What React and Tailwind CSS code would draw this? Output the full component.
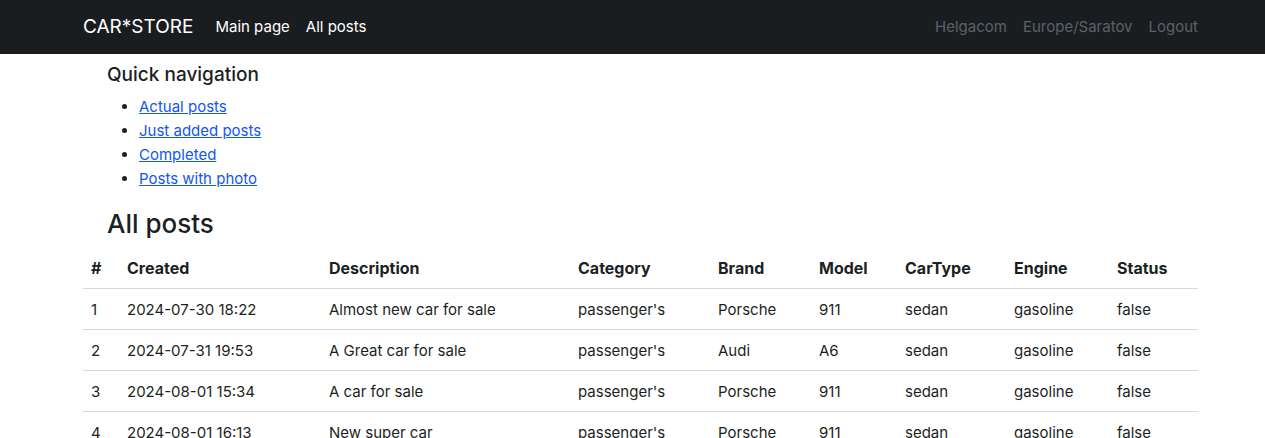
const posts = [
  ["2024-07-30 18:22", "Almost new car for sale", "Porsche", "911"],
  ["2024-07-31 19:53", "A Great car for sale", "Audi", "A6"],
  ["2024-08-01 15:34", "A car for sale", "Porsche", "911"],
  ["2024-08-01 16:13", "New super car", "Porsche", "911"],
];
const quickLinks = ["Actual posts", "Just added posts", "Completed", "Posts with photo"];
const columns = [
  ["#", "w-9"],
  ["Created", "w-[202px]"],
  ["Description", "w-[249px]"],
  ["Category", "w-[140px]"],
  ["Brand", "w-[101px]"],
  ["Model", "w-[86px]"],
  ["CarType", "w-[109px]"],
  ["Engine", "w-[103px]"],
  ["Status", "w-[89px]"],
];

export default function App() {
  return (
    <div className="min-h-screen bg-white font-['Inter',sans-serif] text-[15px] leading-6 text-[#1c1f23]">
      <header className="bg-[#1a1d20] pl-4">
        <nav className="mx-auto flex h-[54px] max-w-[1115px] items-center text-white">
          <a href="#" className="mr-[22px] text-[19px]">CAR*STORE</a>
          <div className="flex flex-1 gap-4">
            <a href="#">Main page</a>
            <a href="#">All posts</a>
          </div>
          <div className="flex gap-4 text-[#5a6169]">
            <a href="#">Helgacom</a>
            <a href="#">Europe/Saratov</a>
            <a href="#">Logout</a>
          </div>
        </nav>
      </header>
      <main className="pl-4">
        <div className="mx-auto max-w-[1115px]">
          <section className="px-6 pt-[9px]">
            <h2 className="mb-2 text-[19px] leading-6 font-medium">Quick navigation</h2>
            <ul className="mb-4 list-disc pl-8">
              {quickLinks.map((label) => (
                <li key={label}>
                  <a href="#" className="text-[#1156ee] underline">{label}</a>
                </li>
              ))}
            </ul>
          </section>
          <h1 className="mb-[7px] px-6 text-[26px] leading-[34px] font-medium">All posts</h1>
          <table className="w-full table-fixed border-collapse text-left">
            <thead>
              <tr className="border-b border-[#d6dadf]">
                {columns.map(([label, width]) => (
                  <th key={label} className={`${width} p-2 text-base leading-6 font-bold`}>{label}</th>
                ))}
              </tr>
            </thead>
            <tbody>
              {posts.map(([created, description, brand, model], i) => (
                <tr key={created} className="border-b border-[#d6dadf]">
                  {[i + 1, created, description, "passenger's", brand, model, "sedan", "gasoline", "false"].map((cell, j) => (
                    <td key={j} className="px-2 pt-[9px] pb-[7px]">{cell}</td>
                  ))}
                </tr>
              ))}
            </tbody>
          </table>
        </div>
      </main>
    </div>
  );
}
